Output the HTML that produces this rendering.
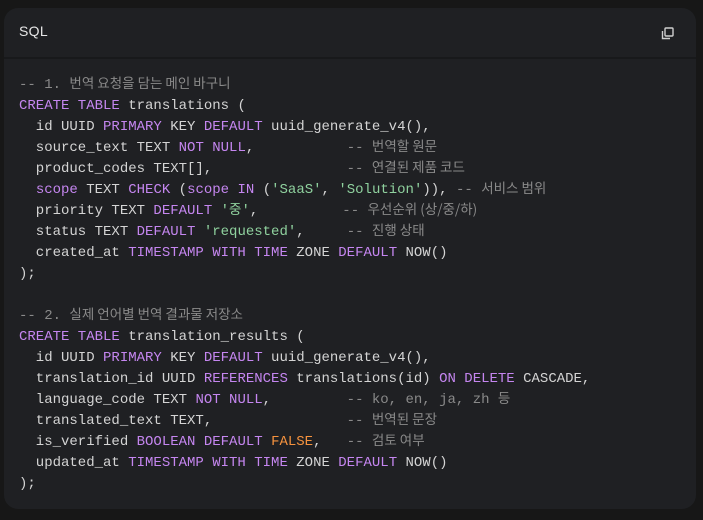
<!DOCTYPE html>
<html><head><meta charset="utf-8"><style>
html,body{margin:0;padding:0;background:#171717;width:703px;height:520px;overflow:hidden}
.card{position:absolute;left:4px;top:8px;width:692px;height:501px;background:#1f2023;border-radius:14px;overflow:hidden}
.hdr{height:49px;position:relative;border-bottom:2px solid #18191b}
.hdr span{position:absolute;left:15px;top:15px;font:14px "Liberation Sans",sans-serif;color:#e6e6e6;letter-spacing:.3px}
.hdr svg{position:absolute;right:22px;top:19px}
.code{padding:16px 0 0 15px;font:14px/21px "Liberation Mono","Noto Sans CJK KR",monospace;color:#d4d4d4}
.code div{height:21px;overflow:visible;white-space:pre}
.p{color:#c586f0}.s{color:#8fd19e}.o{color:#f5923e}.c{color:#8a8a8a}
.k{font-size:13.5px;font-family:"Noto Sans CJK KR",sans-serif;line-height:0}
</style></head><body>
<div class="card">
<div class="hdr"><span>SQL</span>
<svg width="13" height="13" viewBox="0 0 13 13" fill="none" stroke="#cfcfcf" stroke-width="1.4"><rect x="4" y="1" width="8" height="8" rx="1"/><path d="M1.5 4v7.5h7.5"/></svg></div>
<div class="code">
<div><span class="c">-- 1. <span class="k">번역 요청을 담는 메인 바구니</span></span></div>
<div><span class="p">CREATE TABLE</span> translations (</div>
<div>  id UUID <span class="p">PRIMARY</span> KEY <span class="p">DEFAULT</span> uuid_generate_v4(),</div>
<div>  source_text TEXT <span class="p">NOT NULL</span>,           <span class="c">-- <span class="k">번역할 원문</span></span></div>
<div>  product_codes TEXT[],                <span class="c">-- <span class="k">연결된 제품 코드</span></span></div>
<div>  <span class="p">scope</span> TEXT <span class="p">CHECK</span> (<span class="p">scope IN</span> (<span class="s">'SaaS'</span>, <span class="s">'Solution'</span>)), <span class="c">-- <span class="k">서비스 범위</span></span></div>
<div>  priority TEXT <span class="p">DEFAULT</span> <span class="s">'<span class="k">중</span>'</span>,          <span class="c">-- <span class="k">우선순위 (상/중/하)</span></span></div>
<div>  status TEXT <span class="p">DEFAULT</span> <span class="s">'requested'</span>,     <span class="c">-- <span class="k">진행 상태</span></span></div>
<div>  created_at <span class="p">TIMESTAMP WITH TIME</span> ZONE <span class="p">DEFAULT</span> NOW()</div>
<div>);</div>
<div> </div>
<div><span class="c">-- 2. <span class="k">실제 언어별 번역 결과물 저장소</span></span></div>
<div><span class="p">CREATE TABLE</span> translation_results (</div>
<div>  id UUID <span class="p">PRIMARY</span> KEY <span class="p">DEFAULT</span> uuid_generate_v4(),</div>
<div>  translation_id UUID <span class="p">REFERENCES</span> translations(id) <span class="p">ON DELETE</span> CASCADE,</div>
<div>  language_code TEXT <span class="p">NOT NULL</span>,         <span class="c">-- ko, en, ja, zh <span class="k">등</span></span></div>
<div>  translated_text TEXT,                <span class="c">-- <span class="k">번역된 문장</span></span></div>
<div>  is_verified <span class="p">BOOLEAN DEFAULT</span> <span class="o">FALSE</span>,   <span class="c">-- <span class="k">검토 여부</span></span></div>
<div>  updated_at <span class="p">TIMESTAMP WITH TIME</span> ZONE <span class="p">DEFAULT</span> NOW()</div>
<div>);</div>
</div>
</div>
</body></html>
